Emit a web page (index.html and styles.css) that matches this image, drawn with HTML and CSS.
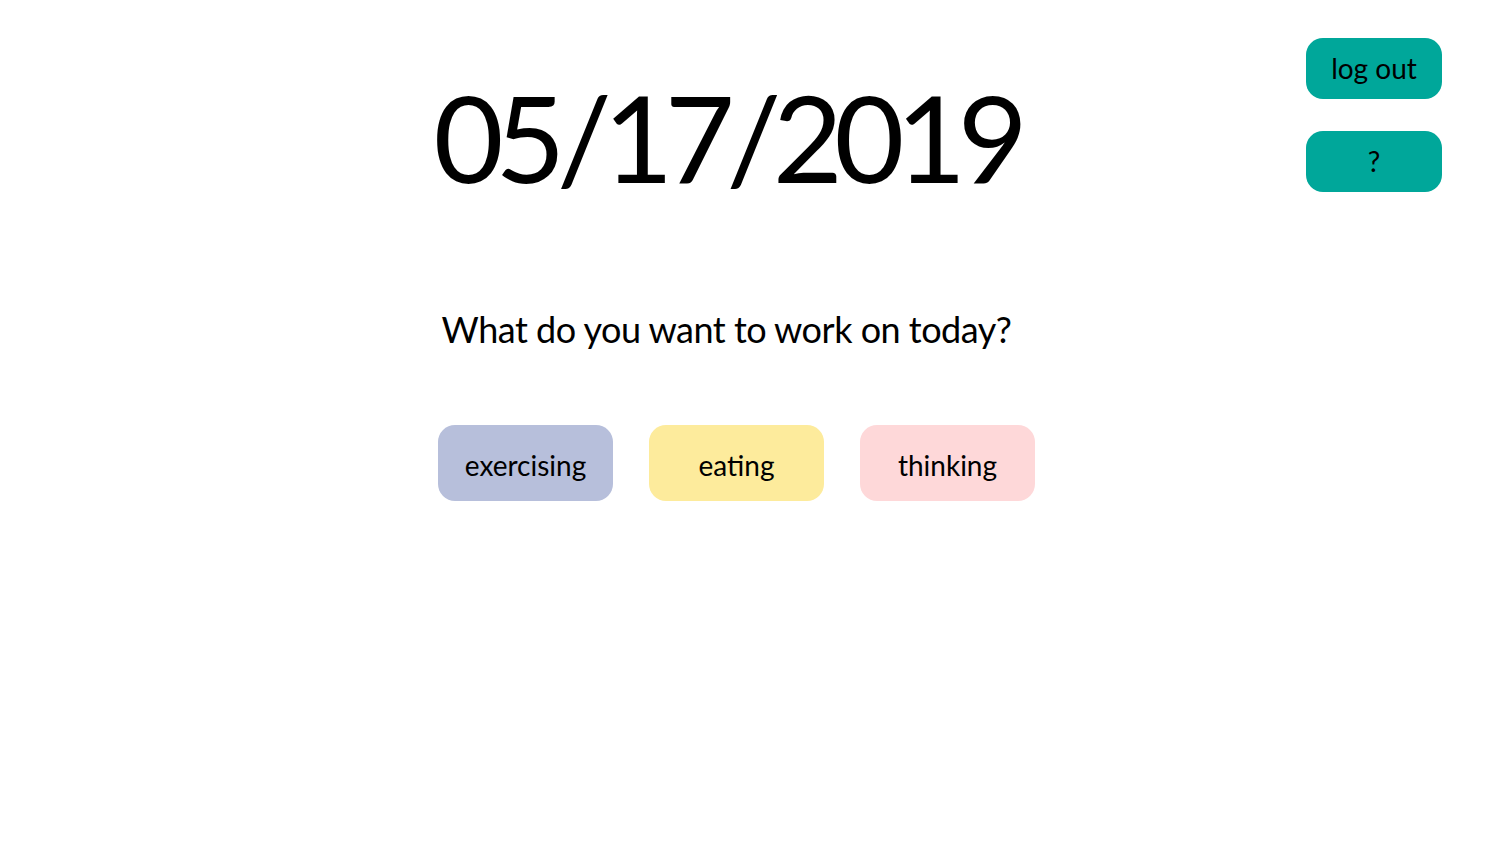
FILE: index.html
```html
<!DOCTYPE html>
<html lang="en">
<head>
<meta charset="utf-8">
<title>Today</title>
<link rel="stylesheet" href="styles.css">
</head>
<body>
<div class="page">
  <div class="spacer"></div>
  <main class="main">
    <h1 class="date">05/17/2019</h1>
    <p class="question">What do you want to work on today?</p>
    <div class="choices">
      <button class="choice choice-exercise">exercising</button>
      <button class="choice choice-eat">eating</button>
      <button class="choice choice-think">thinking</button>
    </div>
  </main>
  <nav class="side">
    <button class="side-btn">log out</button>
    <button class="side-btn">?</button>
  </nav>
</div>
</body>
</html>
```
FILE: styles.css
```css
* { box-sizing: border-box; }
html, body { margin: 0; padding: 0; background: #fff; }
body {
  font-family: Lato, "Open Sans", sans-serif;
  color: #000;
  width: 1509px;
  height: 863px;
  overflow: hidden;
}
.page {
  display: grid;
  grid-template-columns: 1fr auto 1fr;
  height: 100%;
}
.main {
  display: flex;
  flex-direction: column;
  align-items: center;
  padding-right: 56px;
}
.date {
  margin: 62px 0 0 0;
  font-size: 121px;
  font-weight: 400;
  line-height: 150px;
  letter-spacing: -8.5px;
}
.question {
  margin: 94px 0 0 0;
  font-size: 36px;
  line-height: 46px;
  letter-spacing: -0.5px;
}
.choices {
  display: flex;
  gap: 36px;
  margin-top: 73px;
  margin-left: 20px;
}
.choice {
  width: 175px;
  height: 76px;
  border: none;
  border-radius: 17px;
  font-family: inherit;
  font-size: 28px;
  color: #000;
  padding: 3px 0 0 0;
  cursor: pointer;
}
.choice-exercise { background: #b7bfdb; }
.choice-eat { background: #fdeb9c; }
.choice-think { background: #fed8d9; }
.side {
  display: flex;
  flex-direction: column;
  align-items: flex-end;
  gap: 32px;
  padding: 38px 67px 0 0;
}
.side-btn {
  width: 136px;
  height: 61px;
  border: none;
  border-radius: 17px;
  background: #00a79a;
  font-family: inherit;
  font-size: 28px;
  color: #000;
  padding: 0 0 2px 0;
  cursor: pointer;
}
```
